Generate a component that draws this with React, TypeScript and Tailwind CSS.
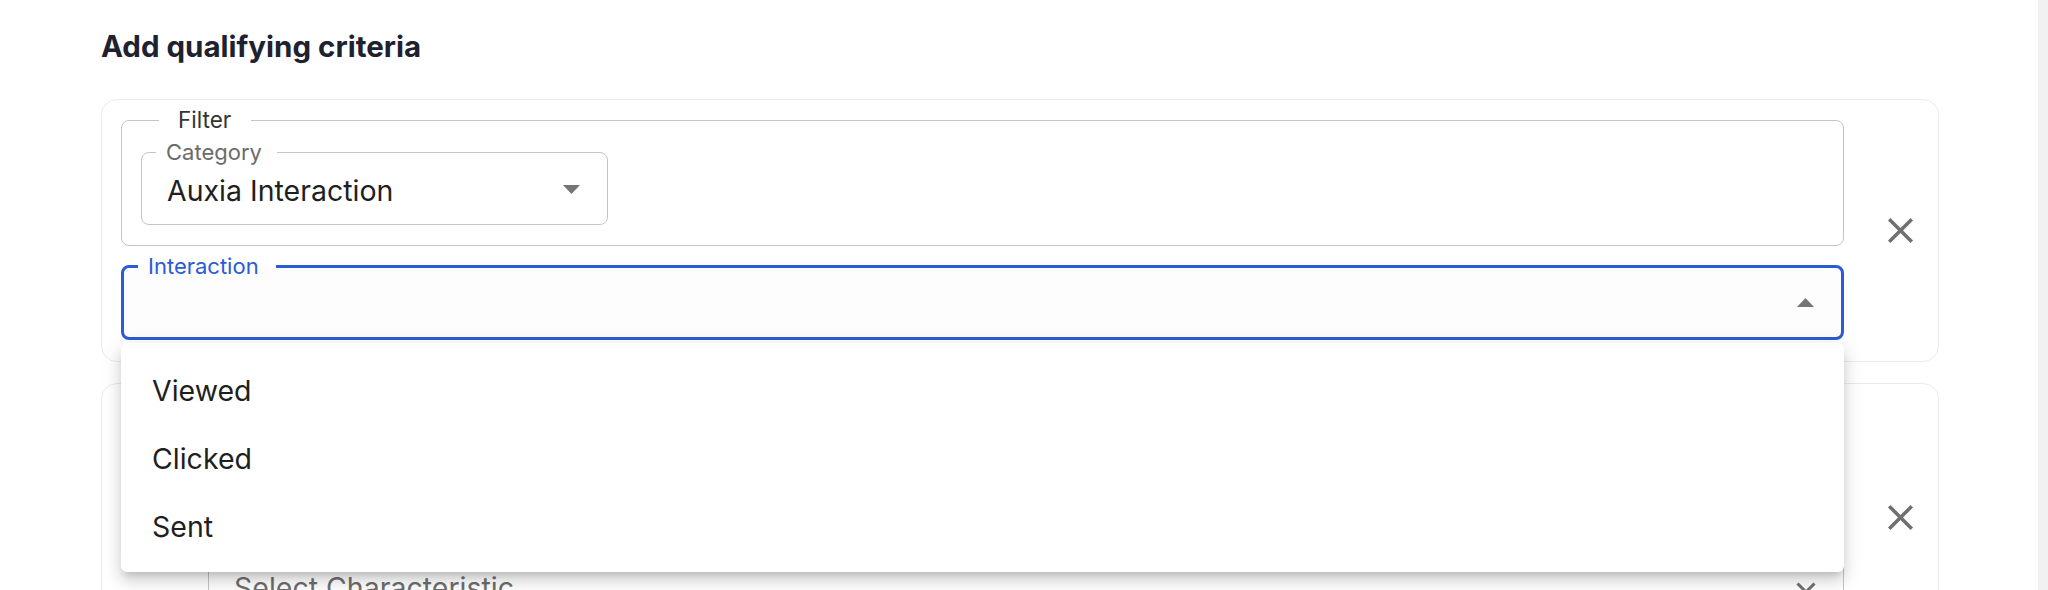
import React from "react";

const CloseIcon = () => (
  <svg width="43" height="43" viewBox="0 0 24 24" fill="#707070">
    <path d="M19 6.41 17.59 5 12 10.59 6.41 5 5 6.41 10.59 12 5 17.59 6.41 19 12 13.41 17.59 19 19 17.59 13.41 12z" />
  </svg>
);

const ArrowDown = () => (
  <svg width="17" height="9" viewBox="0 0 17 9" className="mt-[10px] shrink-0">
    <polygon points="0,0 17,0 8.5,9" fill="#757575" />
  </svg>
);

const ArrowUp = () => (
  <svg width="17" height="9" viewBox="0 0 17 9" className="shrink-0">
    <polygon points="0,9 8.5,0 17,9" fill="#757575" />
  </svg>
);

const Chevron = () => (
  <svg width="20" height="12" viewBox="0 0 20 12" className="shrink-0">
    <polyline points="1.5,1.5 10,10 18.5,1.5" fill="none" stroke="#707070" strokeWidth="3" />
  </svg>
);

const options = ["Viewed", "Clicked", "Sent"];

export default function App() {
  return (
    <div className="flex h-[590px] w-full overflow-hidden bg-white font-['Inter',sans-serif]">
      <div className="flex-1 pl-[101px] pr-[99px] pt-[28px]">
        <h2 className="text-[29.5px] font-bold leading-[36px] text-[#1e2230]">Add qualifying criteria</h2>

        {/* Card 1 */}
        <div className="mt-[35px] flex rounded-[16px] border border-[#ebebeb] bg-white">
          <div className="flex-1 pb-[21px] pl-[19px] pt-[8px]">
            <fieldset className="rounded-[8px] border-[1.5px] border-[#c4c4c4]">
              <legend className="ml-[37px] pl-[19px] pr-[20px] text-[22.5px] leading-[24px] text-[#333333]">
                Filter
              </legend>
              <div className="pb-[20px] pl-[19px] pt-[8px]">
                <fieldset className="w-[467px] rounded-[8px] border-[1.5px] border-[#c4c4c4]">
                  <legend className="ml-[14px] pl-[10px] pr-[15px] text-[22px] leading-[24px] text-[#6b6b6b]">
                    Category
                  </legend>
                  <div className="flex h-[60px] items-start justify-between pl-[25px] pr-[27px] pt-[11px]">
                    <span className="text-[28.5px] leading-[32px] text-[#1f1f1f]">Auxia Interaction</span>
                    <ArrowDown />
                  </div>
                </fieldset>
              </div>
            </fieldset>

            <div className="relative mt-[8px]">
              <fieldset className="rounded-[8px] border-[3px] border-[#2b5bd6] bg-[#fdfdfd]">
                <legend className="ml-[14px] pl-[10px] pr-[17px] text-[22px] leading-[24px] text-[#2b5bd6]">
                  Interaction
                </legend>
                <div className="flex h-[59px] items-start justify-end pr-[27px] pt-[20px]">
                  <ArrowUp />
                </div>
              </fieldset>

              <div className="absolute left-0 right-0 top-full z-10 mt-[3px] rounded-[6px] bg-white pb-[11px] pt-[14px] shadow-[0_6px_7px_-4px_rgba(0,0,0,0.16),0_10px_14px_1px_rgba(0,0,0,0.1),0_4px_20px_3px_rgba(0,0,0,0.08)]">
                {options.map((o) => (
                  <div key={o} className="flex h-[68px] items-center pl-[31px] text-[28.5px] leading-[32px] text-[#1f1f1f]">
                    {o}
                  </div>
                ))}
              </div>
            </div>
          </div>
          <div className="flex items-center pl-[35px] pr-[16px]">
            <CloseIcon />
          </div>
        </div>

        {/* Card 2 */}
        <div className="mt-[21px] flex rounded-[16px] border border-[#ebebeb] bg-white">
          <div className="flex-1 pb-[26px] pl-[106px] pt-[167px]">
            <div className="flex h-[73px] items-center justify-between rounded-[8px] border-[1.5px] border-[#c4c4c4] pl-[25px] pr-[27px]">
              <span className="text-[28.5px] leading-[32px] text-[#6e6e6e]">Select Characteristic</span>
              <Chevron />
            </div>
          </div>
          <div className="flex items-center pl-[35px] pr-[16px]">
            <CloseIcon />
          </div>
        </div>
      </div>
      <div className="h-full w-[10px] shrink-0 bg-[#f1f1f1]" />
    </div>
  );
}
